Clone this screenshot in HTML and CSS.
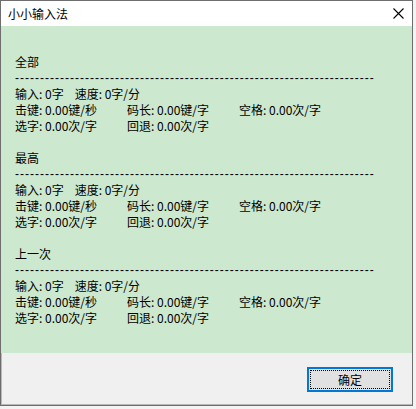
FILE: index.html
```html
<!DOCTYPE html>
<html lang="zh-CN">
<head>
<meta charset="utf-8">
<title>小小输入法</title>
<link rel="stylesheet" href="styles.css">
</head>
<body>
<div class="window">
  <div class="titlebar">
    <span class="title">小小输入法</span>
    <svg class="close" width="11" height="11" viewBox="0 0 11 11"><path d="M0.5 0.5 L10.5 10.5 M10.5 0.5 L0.5 10.5" stroke="#000" stroke-width="1.1" fill="none"/></svg>
  </div>
  <div class="content">
    <div class="section">
      <div class="line">全部</div>
      <div class="line dashes">------------------------------------------------------------------------</div>
      <div class="line"><span>输入: 0字</span><span class="speed">速度: 0字/分</span></div>
      <div class="line grid"><span>击键: 0.00键/秒</span><span>码长: 0.00键/字</span><span>空格: 0.00次/字</span></div>
      <div class="line grid"><span>选字: 0.00次/字</span><span>回退: 0.00次/字</span></div>
    </div>
    <div class="section">
      <div class="line">最高</div>
      <div class="line dashes">------------------------------------------------------------------------</div>
      <div class="line"><span>输入: 0字</span><span class="speed">速度: 0字/分</span></div>
      <div class="line grid"><span>击键: 0.00键/秒</span><span>码长: 0.00键/字</span><span>空格: 0.00次/字</span></div>
      <div class="line grid"><span>选字: 0.00次/字</span><span>回退: 0.00次/字</span></div>
    </div>
    <div class="section">
      <div class="line">上一次</div>
      <div class="line dashes">------------------------------------------------------------------------</div>
      <div class="line"><span>输入: 0字</span><span class="speed">速度: 0字/分</span></div>
      <div class="line grid"><span>击键: 0.00键/秒</span><span>码长: 0.00键/字</span><span>空格: 0.00次/字</span></div>
      <div class="line grid"><span>选字: 0.00次/字</span><span>回退: 0.00次/字</span></div>
    </div>
  </div>
  <div class="footer">
    <button class="ok"><span class="ok-inner">确定</span></button>
  </div>
</div>
</body>
</html>
```

FILE: styles.css
```css
html, body {
  margin: 0;
  padding: 0;
}
body {
  width: 416px;
  height: 409px;
  background: #f3f3f3;
  font-family: "Noto Sans CJK SC", "Noto Sans", sans-serif;
  font-size: 12px;
  color: #000;
  overflow: hidden;
}
.window {
  width: 413px;
  height: 406px;
  box-sizing: border-box;
  border: 1px solid #6e6e6e;
  box-shadow: inset 1px 0 0 #b8b8b8, inset 0 -1px 0 #b8b8b8;
  display: flex;
  flex-direction: column;
  background: #f0f0f0;
}
.titlebar {
  height: 25px;
  flex: none;
  background: #fff;
  display: flex;
  align-items: center;
  justify-content: space-between;
  padding: 0 8px 0 7px;
}
.title {
  font-size: 12px;
  line-height: 16px;
}
.close {
  display: block;
}
.content {
  height: 327px;
  flex: none;
  background: #cce8cf;
  padding: 28px 0 0 14px;
  box-sizing: border-box;
}
.section {
  margin-bottom: 16px;
}
.line {
  height: 16px;
  line-height: 16px;
  white-space: nowrap;
}
.dashes {
  font-family: "Liberation Sans", sans-serif;
  letter-spacing: 1px;
}
.speed {
  margin-left: 11px;
}
.grid {
  display: grid;
  grid-template-columns: 112px 112px 112px;
}
.footer {
  flex: 1;
  display: flex;
  justify-content: flex-end;
  align-items: flex-start;
  padding: 14px 19px 0 0;
}
.ok {
  width: 86px;
  height: 25px;
  box-sizing: border-box;
  border: 2px solid #0078d7;
  background: #e1e1e1;
  padding: 1px;
  margin: 0;
  font-family: inherit;
  font-size: 12px;
  color: #000;
  display: flex;
}
.ok-inner {
  flex: 1;
  border: 1px dotted #000;
  display: flex;
  align-items: center;
  justify-content: center;
  line-height: 14px;
}
```
